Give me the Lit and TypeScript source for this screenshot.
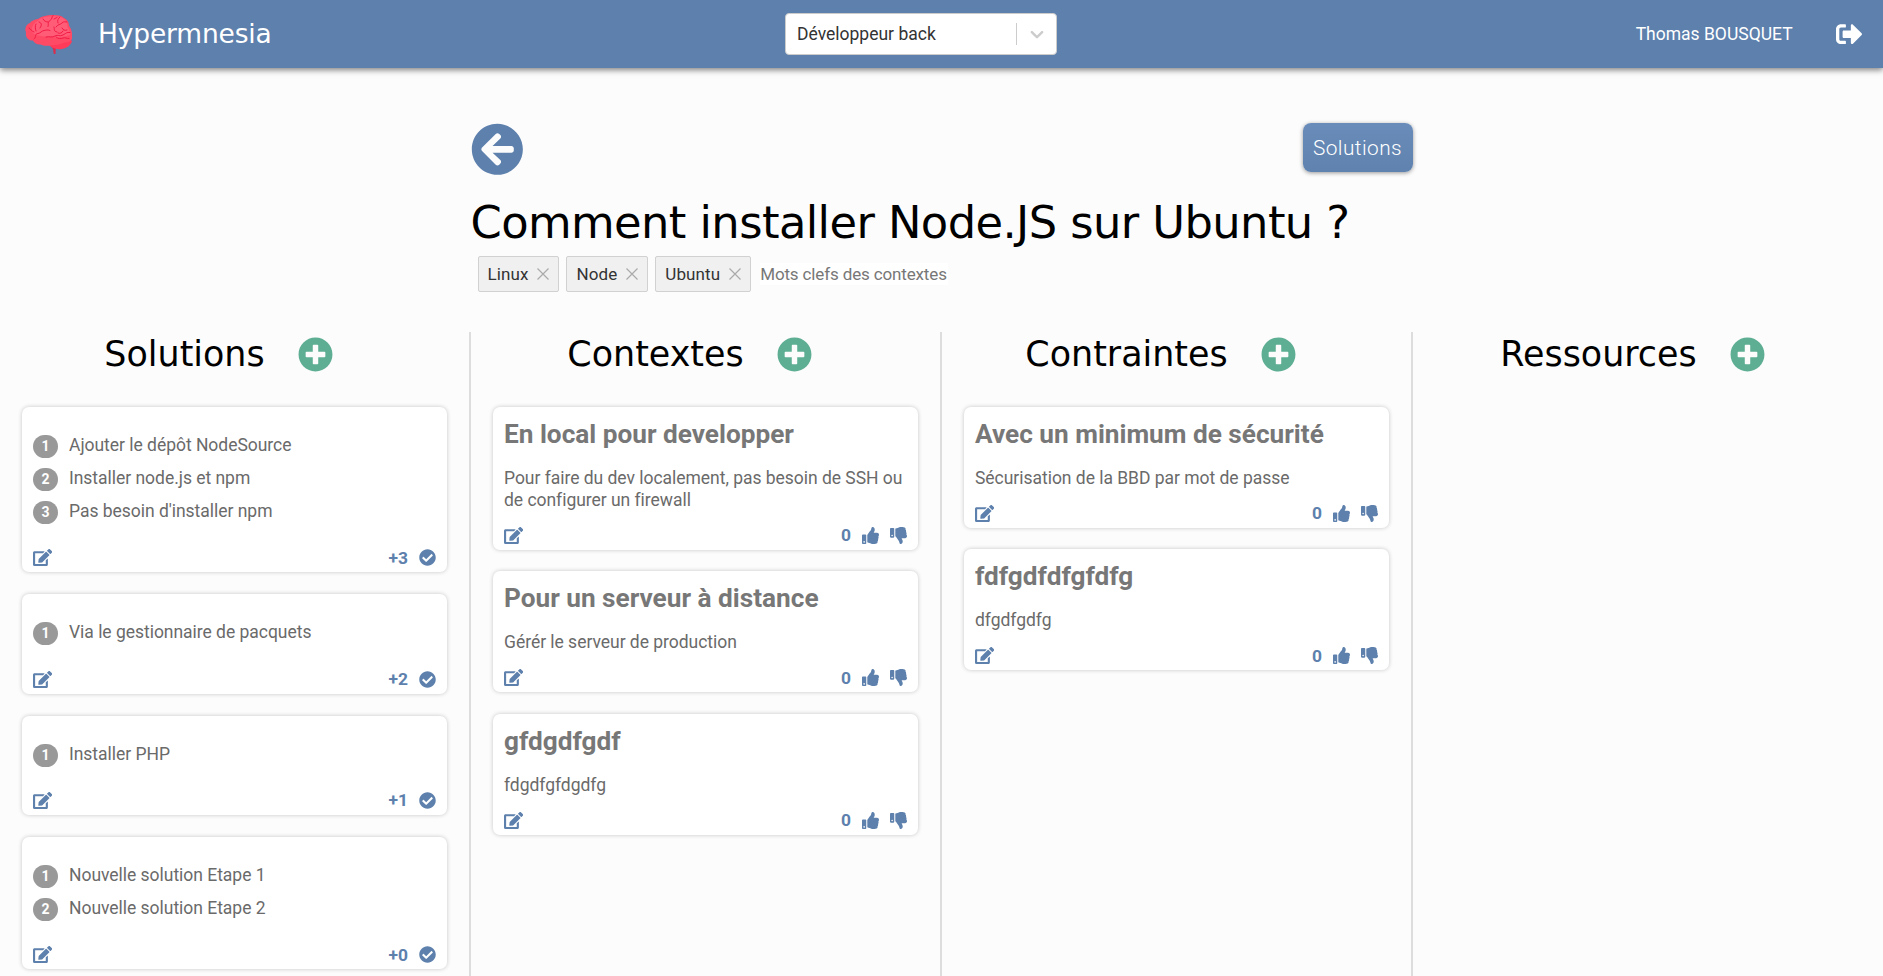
import { LitElement, html, css, svg } from "lit";
import { customElement, property } from "lit/decorators.js";

const ICONS: Record<string, { w: number; d: string }> = {
  back: { w: 512, d: "M256 504C119 504 8 393 8 256S119 8 256 8s248 111 248 248-111 248-248 248zm28.9-143.6L209.4 288H392c13.3 0 24-10.7 24-24v-16c0-13.3-10.7-24-24-24H209.4l75.5-72.4c9.7-9.3 9.9-24.8.4-34.3l-11-10.9c-9.4-9.4-24.6-9.4-33.9 0L107.7 239c-9.4 9.4-9.4 24.6 0 33.9l132.7 132.7c9.4 9.4 24.6 9.4 33.9 0l11-10.9c9.5-9.5 9.3-25-.4-34.3z" },
  plus: { w: 512, d: "M256 8C119 8 8 119 8 256s111 248 248 248 248-111 248-248S393 8 256 8zm144 276c0 6.6-5.4 12-12 12h-92v92c0 6.6-5.4 12-12 12h-56c-6.6 0-12-5.4-12-12v-92h-92c-6.6 0-12-5.4-12-12v-56c0-6.6 5.4-12 12-12h92v-92c0-6.6 5.4-12 12-12h56c6.6 0 12 5.4 12 12v92h92c6.6 0 12 5.4 12 12v56z" },
  check: { w: 512, d: "M504 256c0 136.967-111.033 248-248 248S8 392.967 8 256 119.033 8 256 8s248 111.033 248 248zM227.314 387.314l184-184c6.248-6.248 6.248-16.379 0-22.627l-22.627-22.627c-6.248-6.249-16.379-6.249-22.628 0L216 308.118l-70.059-70.059c-6.248-6.248-16.379-6.248-22.628 0l-22.627 22.627c-6.248 6.248-6.248 16.379 0 22.627l104 104c6.249 6.249 16.379 6.249 22.628.001z" },
  edit: { w: 576, d: "M402.6 83.2l90.2 90.2c3.8 3.8 3.8 10 0 13.8L274.4 405.6l-92.8 10.3c-12.4 1.4-22.9-9.1-21.5-21.5l10.3-92.8L388.8 83.2c3.8-3.8 10-3.8 13.8 0zm162-22.9l-48.8-48.8c-15.2-15.2-39.9-15.2-55.2 0l-35.4 35.4c-3.8 3.8-3.8 10 0 13.8l90.2 90.2c3.8 3.8 10 3.8 13.8 0l35.4-35.4c15.2-15.3 15.2-40 0-55.2zM384 346.2V448H64V128h229.8c3.2 0 6.2-1.3 8.5-3.5l40-40c7.6-7.6 2.2-20.5-8.5-20.5H48C21.5 64 0 85.5 0 112v352c0 26.5 21.5 48 48 48h352c26.5 0 48-21.5 48-48V306.2c0-10.7-12.9-16-20.5-8.5l-40 40c-2.2 2.3-3.5 5.3-3.5 8.5z" },
  up: { w: 512, d: "M104 224H24c-13.255 0-24 10.745-24 24v240c0 13.255 10.745 24 24 24h80c13.255 0 24-10.745 24-24V248c0-13.255-10.745-24-24-24zM64 472c-13.255 0-24-10.745-24-24s10.745-24 24-24 24 10.745 24 24-10.745 24-24 24zM384 81.452c0 42.416-25.97 66.208-33.277 94.548h101.723c33.397 0 59.397 27.746 59.553 58.098.084 17.938-7.546 37.249-19.439 49.197l-.11.11c9.836 23.337 8.237 56.037-9.308 79.469 8.681 25.895-.069 57.704-16.382 74.757 4.298 17.598 2.244 32.575-6.148 44.632C440.202 511.587 389.616 512 346.839 512l-2.845-.001c-48.287-.017-87.806-17.598-119.56-31.725-15.957-7.099-36.821-15.887-52.651-16.178-6.54-.12-11.783-5.457-11.783-11.998v-213.77c0-3.2 1.282-6.271 3.558-8.521 39.614-39.144 56.648-80.587 89.117-113.111 14.804-14.832 20.188-37.236 25.393-58.902C282.515 39.293 291.817 0 312 0c24 0 72 8 72 81.452z" },
  down: { w: 512, d: "M0 56v240c0 13.255 10.745 24 24 24h80c13.255 0 24-10.745 24-24V56c0-13.255-10.745-24-24-24H24C10.745 32 0 42.745 0 56zm40 200c0-13.255 10.745-24 24-24s24 10.745 24 24-10.745 24-24 24-24-10.745-24-24zm272 256c-20.183 0-29.485-39.293-33.931-57.795-5.206-21.666-10.589-44.07-25.393-58.902-32.469-32.524-49.503-73.967-89.117-113.111a11.98 11.98 0 0 1-3.558-8.521V59.901c0-6.541 5.243-11.878 11.783-11.998 15.831-.29 36.694-9.079 52.651-16.178C256.189 17.598 295.709.017 343.995 0h2.844c42.777 0 93.363.413 113.774 29.737 8.392 12.057 10.446 27.034 6.148 44.632 16.312 17.053 25.063 48.863 16.382 74.757 17.544 23.432 19.143 56.132 9.308 79.469l.11.11c11.893 11.949 19.523 31.259 19.439 49.197-.156 30.352-26.157 58.098-59.553 58.098H350.723C358.03 364.34 384 388.132 384 430.548 384 504 336 512 312 512z" },
  logout: { w: 512, d: "M497 273L329 441c-15 15-41 4.5-41-17v-96H152c-13.3 0-24-10.7-24-24v-96c0-13.3 10.7-24 24-24h136V88c0-21.4 25.9-32 41-17l168 168c9.3 9.4 9.3 24.6 0 34zM192 436v-40c0-6.6-5.4-12-12-12H96c-17.7 0-32-14.3-32-32V160c0-17.7 14.3-32 32-32h84c6.6 0 12-5.4 12-12V76c0-6.6-5.4-12-12-12H96c-53 0-96 43-96 96v192c0 53 43 96 96 96h84c6.6 0 12-5.4 12-12z" },
  chevron: { w: 20, d: "M4.516 7.548c0.436-0.446 1.043-0.481 1.576 0l3.908 3.747 3.908-3.747c0.533-0.481 1.141-0.446 1.574 0 0.436 0.445 0.408 1.197 0 1.615-0.406 0.418-4.695 4.502-4.695 4.502-0.217 0.223-0.502 0.335-0.787 0.335s-0.57-0.112-0.789-0.335c0 0-4.287-4.084-4.695-4.502s-0.436-1.17 0-1.615z" },
};

const icon = (name: string) => {
  const { w, d } = ICONS[name];
  return html`<svg class="icon ${name}" viewBox="0 0 ${w} ${w === 20 ? 20 : 512}">${svg`<path fill="currentColor" d=${d} />`}</svg>`;
};

const iconStyles = css`
  * { box-sizing: border-box; }
  .icon { display: block; height: 1em; width: auto; flex: none; }
`;

interface Item {
  title?: string;
  text?: string;
  steps?: string[];
  score: string;
}

@customElement("item-card")
export class ItemCard extends LitElement {
  @property({ attribute: false }) item!: Item;

  static styles = [
    iconStyles,
    css`
      :host { display: block; }
      .card {
        padding: 0 11px 6px;
        border-radius: 7px;
        background: #fff;
        box-shadow: 0 0 4px rgba(0, 0, 0, 0.22);
        color: #6a6a6a;
        font-size: 17.5px;
        letter-spacing: -0.03px;
        line-height: 22px;
      }
      .title {
        margin: 0;
        padding-top: 12px;
        font-size: 26.2px;
        line-height: 30px;
        font-weight: 700;
        letter-spacing: 0;
        color: #777;
      }
      .text { margin: 17.6px 0 16px; }
      .steps {
        list-style: none;
        margin: 0;
        padding: 28px 0 25.2px;
        display: flex;
        flex-direction: column;
        gap: 9.8px;
      }
      .step { display: flex; height: 23.2px; gap: 11px; }
      .label { line-height: 21px; }
      .num {
        width: 25px;
        height: 23.2px;
        border-radius: 12px;
        background: #999;
        color: #fff;
        font-size: 14px;
        font-weight: 700;
        line-height: 22px;
        text-align: center;
      }
      .footer {
        display: flex;
        align-items: center;
        height: 17px;
        font-size: 17px;
        color: #5d80ad;
        font-weight: 700;
      }
      .score { margin-left: auto; margin-right: 11px; font-size: 17.4px; }
      .down { margin-left: 11px; }
    `,
  ];

  render() {
    const { title, text, steps, score } = this.item;
    return html`<article class="card">
      ${steps
        ? html`<ol class="steps">
            ${steps.map((s, i) => html`<li class="step"><span class="num">${i + 1}</span><span class="label">${s}</span></li>`)}
          </ol>`
        : html`<h3 class="title">${title}</h3><p class="text">${text}</p>`}
      <div class="footer">
        ${icon("edit")}<span class="score">${score}</span>
        ${steps ? icon("check") : html`${icon("up")}${icon("down")}`}
      </div>
    </article>`;
  }
}

const COLUMNS: { name: string; items: Item[] }[] = [
  {
    name: "Solutions",
    items: [
      { steps: ["Ajouter le dépôt NodeSource", "Installer node.js et npm", "Pas besoin d'installer npm"], score: "+3" },
      { steps: ["Via le gestionnaire de pacquets"], score: "+2" },
      { steps: ["Installer PHP"], score: "+1" },
      { steps: ["Nouvelle solution Etape 1", "Nouvelle solution Etape 2"], score: "+0" },
    ],
  },
  {
    name: "Contextes",
    items: [
      { title: "En local pour developper", text: "Pour faire du dev localement, pas besoin de SSH ou de configurer un firewall", score: "0" },
      { title: "Pour un serveur à distance", text: "Gérér le serveur de production", score: "0" },
      { title: "gfdgdfgdf", text: "fdgdfgfdgdfg", score: "0" },
    ],
  },
  {
    name: "Contraintes",
    items: [
      { title: "Avec un minimum de sécurité", text: "Sécurisation de la BBD par mot de passe", score: "0" },
      { title: "fdfgdfdfgfdfg", text: "dfgdfgdfg", score: "0" },
    ],
  },
  { name: "Ressources", items: [] },
];

@customElement("app-root")
export class AppRoot extends LitElement {
  static styles = [
    iconStyles,
    css`
      :host {
        display: flex;
        flex-direction: column;
        height: 100vh;
        overflow: hidden;
        background: #fcfcfc;
        font-family: Roboto, sans-serif;
        font-size: 17px;
        color: #000;
      }
      .bar {
        flex: none;
        display: flex;
        align-items: center;
        height: 68px;
        padding: 0 21px 0 25px;
        background: #5d80ad;
        color: #fff;
        box-shadow: 0 2px 6px rgba(0, 0, 0, 0.5);
      }
      .brand { display: flex; align-items: center; gap: 26px; width: 760px; }
      .brain { display: block; width: 47px; height: 40px; }
      .name { font: 26.5px/32px "DejaVu Sans", sans-serif; letter-spacing: -0.18px; }
      .select {
        display: flex;
        align-items: center;
        width: 272px;
        height: 42px;
        padding: 0 8px 0 11px;
        border: 1px solid #ccc;
        border-radius: 4px;
        background: #fff;
        color: #333;
        font-size: 17.5px;
      }
      .select .value { flex: 1; }
      .sep { width: 1px; height: 22px; background: #ccc; }
      .select .icon { font-size: 22px; margin-left: 9px; color: #ccc; }
      .user { display: flex; margin-left: auto; align-items: center; gap: 43px; font-size: 17.5px; }
      .user .icon { font-size: 26.4px; }
      .head { flex: none; width: 942px; margin: 0 auto; height: 264px; padding-top: 55px; }
      .actions { display: flex; justify-content: space-between; align-items: flex-start; height: 62px; }
      .actions .icon { font-size: 52.7px; color: #5d80ad; }
      .button {
        height: 49px;
        width: 110px;
        border: 0;
        padding: 0;
        border-radius: 8px;
        background: linear-gradient(to top, #5f82ae, #698cba);
        box-shadow: 0 1px 4px rgba(0, 0, 0, 0.4);
        color: #fff;
        font: 300 20.8px Roboto, sans-serif;
        letter-spacing: 0.45px;
      }
      .question { margin: 11px 0 0; font: 400 44.8px/54px "DejaVu Sans", sans-serif; letter-spacing: -0.59px; white-space: nowrap; }
      .tags { display: flex; align-items: center; gap: 7px; padding: 6px 0 0 7px; }
      .tag {
        display: flex;
        align-items: center;
        gap: 9px;
        height: 36px;
        padding: 0 9px;
        border: 1px solid #d1d1d1;
        border-radius: 2px;
        background: #f0f0f0;
        color: #333;
        letter-spacing: 0.1px;
      }
      .cross { width: 12px; height: 12px; }
      .input {
        margin-left: 2px;
        width: 188px;
        height: 22px;
        line-height: 22px;
        letter-spacing: -0.14px;
        background: #fff;
        color: #777;
        white-space: nowrap;
      }
      .board { flex: 1; min-height: 0; display: grid; grid-template-columns: repeat(4, 471px); }
      .column { border-right: 2px solid #ddd; padding: 0 22px; overflow: hidden; }
      .column:last-child { border-right: 0; }
      .heading { display: flex; justify-content: center; align-items: center; height: 44px; margin-bottom: 31px; padding-left: 2px; }
      .heading h2 { margin: 0; font: 400 34.9px/42px "DejaVu Sans", sans-serif; }
      .heading .icon { margin: 0 33.500px; font-size: 35px; color: #5eae94; }
      .list { display: flex; flex-direction: column; gap: 21.9px; margin: 0 -4px; padding: 0 4px; }
    `,
  ];

  render() {
    return html`
      <header class="bar">
        <div class="brand">
          <svg class="brain" viewBox="0 0 47 40">
            <path fill="#d92d4b" d="M24 30l4 5 .8 5h1.700l.300-6 3-4z" />
            <path fill="#ff3b59" d="M22 29c4 5 9 7 15 6 5-1 9-4 10-8l-6-4-19 4z" />
            <path fill="#ff4a66" d="M13 5C17 2 22 1 27 1c6-.2 10 .5 11.500 2.800 4 1.700 5.500 5 5.500 8 2.500 3 3.200 7 3.200 10.500 0 5-3 6.200-8 6.200-4 2-8 2.700-12 2.700-5 .8-9 .8-11.500-.8-4 .300-6.700-1.400-7.700-3.900C3 26.500.300 23 1 18.500c-2-5 1-8.500 4-9.500 1.500-2 4-3.500 8-4z" />
            <path fill="#ff5c77" d="M13 6.500C18 2 27 1.500 35 3c5 1 8 6 7.500 10 2 3 3.500 6 2.500 8-6 2-12 3-18 2-6 0-10-1-16-2-6-2-6-9 2-14.500z" />
            <path fill="none" stroke="#ee1440" stroke-width=".9" stroke-linecap="round" stroke-linejoin="round" d="M9 25c3-2 0-5 4-5.500 3-.5 3-2.500 6-3s3-1 6 0M11 17c-1-3-1-5 0-7M14 8c3 1 3 3 1 6M18 5c1 2 3 3 5 3M28 1.500c-2 2 0 3-3 5s-1 4-2 6M29 5l3-1.500M35 3c-2 2-3 3-2 6M31 13c2-3 4-2 6-4s3-1 5-1M29 13c1 3-1 4 3 5M37 14c1 2 3 3 5 2M21 23c4-1 6 1 9-1s4 1 8-1 3-3 7-2.500M33 19c2 1 4 0 5-2M31 23c2 2 5 2 7 1s4 1 6 .5M4 14c2 1 2 3 5 4" />
          </svg>
          <span class="name">Hypermnesia</span>
        </div>
        <div class="select">
          <span class="value">Développeur back</span>
          <span class="sep"></span>
          ${icon("chevron")}
        </div>
        <div class="user"><span>Thomas BOUSQUET</span>${icon("logout")}</div>
      </header>
      <section class="head">
        <div class="actions">${icon("back")}<button class="button">Solutions</button></div>
        <h1 class="question">Comment installer Node.JS sur Ubuntu ?</h1>
        <div class="tags">
          ${["Linux", "Node", "Ubuntu"].map(
            (t) => html`<span class="tag">${t}<svg class="cross" viewBox="0 0 12 12"><path d="M.5.5l11 11M11.500.5l-11 11" stroke="#aaa" stroke-width="1.200" /></svg></span>`
          )}
          <span class="input">Mots clefs des contextes</span>
        </div>
      </section>
      <main class="board">
        ${COLUMNS.map(
          (c) => html`<section class="column">
            <div class="heading"><h2>${c.name}</h2>${icon("plus")}</div>
            <div class="list">${c.items.map((i) => html`<item-card .item=${i}></item-card>`)}</div>
          </section>`
        )}
      </main>
    `;
  }
}
